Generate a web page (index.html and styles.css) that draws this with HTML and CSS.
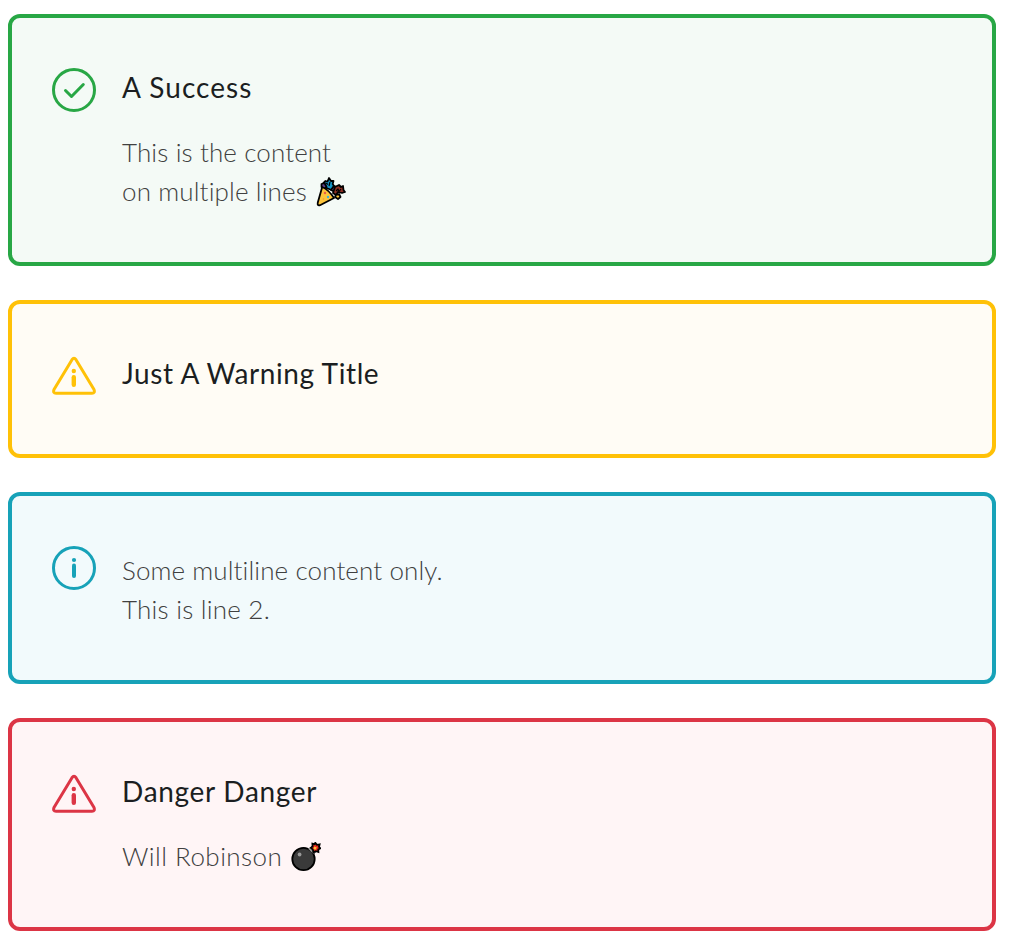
FILE: index.html
```html
<!DOCTYPE html>
<html lang="en">
<head>
<meta charset="utf-8">
<title>Alerts</title>
<link rel="stylesheet" href="styles.css">
</head>
<body>
<main class="alerts">
  <section class="alert success">
    <svg class="icon" viewBox="0 0 44 44"><circle cx="22" cy="22" r="20.5"/><path d="M13.5 22.5l6 6L31.3 16.5"/></svg>
    <div class="body">
      <h2 class="title"><span class="t-success">A Success</span></h2>
      <p class="content"><span class="c-one">This is the content</span><br><span class="c-two">on multiple lines</span><svg class="emoji" viewBox="0 0 30 30"><g stroke="#000" stroke-width="1.8" stroke-linejoin="round"><path fill="#1696c8" d="M7.5 6l2-2 2 .5L13 1l2 3 2.5 0-.8 3L18 9l-2.5 4-5-2-4-3z"/><path fill="#61428f" d="M5.5 7l3-1 2 4-2 2-3-2z"/><path fill="#61428f" d="M15 13l3-4 3 1-2 5z"/><path fill="#8f2f24" d="M17 16l2-6 4-2 2 2 2-1 .5 4 1.5 2-3 1-4-1-2 3z"/><path fill="#fcc43b" d="M20 18l3-1 1.5 3-2.5 2-3-2z"/><path fill="#fcc43b" d="M6.2 10C10 11.5 15 16.5 18 21L4 28.2Q1 29 1.8 25.5z"/><path fill="none" stroke-width="1.2" d="M10 6l2 1.5M14 5l-1 4M20 14l2-2 1 2.5 2-2.5"/></g><circle cx="9" cy="16" r="1.2" fill="#ea5a47"/><circle cx="12" cy="20" r="1.2" fill="#3fb5d6"/><circle cx="7.5" cy="22" r=".8" fill="#e89b2b"/></svg></p>
    </div>
  </section>
  <section class="alert warning">
    <svg class="icon" viewBox="0 0 44 44"><path d="M20 4.7Q22 1.8 24 4.7L42 34.5Q43.3 38.3 40 38.3H4Q.7 38.3 2 34.5Z"/><circle class="solid" cx="21.8" cy="16" r="2.2"/><path class="stem" d="M21.8 22.3v7.4"/></svg>
    <div class="body">
      <h2 class="title"><span class="t-warning">Just A Warning Title</span></h2>
    </div>
  </section>
  <section class="alert info">
    <svg class="icon" viewBox="0 0 44 44"><circle cx="22" cy="22" r="20.5"/><circle class="solid" cx="22" cy="14" r="2.1"/><path class="thin-stem" d="M22 19.5v10.5"/></svg>
    <div class="body">
      <p class="content"><span class="c-three">Some multiline content only.</span><br><span class="c-four">This is line 2.</span></p>
    </div>
  </section>
  <section class="alert danger">
    <svg class="icon" viewBox="0 0 44 44"><path d="M20 4.7Q22 1.8 24 4.7L42 34.5Q43.3 38.3 40 38.3H4Q.7 38.3 2 34.5Z"/><circle class="solid" cx="21.8" cy="16" r="2.2"/><path class="stem" d="M21.8 22.3v7.4"/></svg>
    <div class="body">
      <h2 class="title"><span class="t-danger">Danger Danger</span></h2>
      <p class="content"><span class="c-five">Will Robinson</span><svg class="emoji" viewBox="0 0 30 30"><path d="M18 8l4-4 4 4-4 4z" fill="#8c8c8c" stroke="#000" stroke-width="1.5"/><circle cx="12.5" cy="17" r="11.2" fill="#3a3a3a" stroke="#000" stroke-width="1.8"/><path d="M18 6l3 3 2 2" stroke="#999" stroke-width="2.4" fill="none"/><path d="M24.3.8l1.6 2 2.7-.5-.6 2.5 1.3 1.5-2 1.2.1 2.5-2.5-.8-2.6 1-.4-2.6-2-1.8 1.7-1.4-.2-2.7 2.2.5z" fill="#e8291c" stroke="#000" stroke-width="1.8"/><path d="M22.6 7.2l.6-2.7 1.3.6 1.2.1-.8 2.2z" fill="#fcc43b"/><circle cx="8.6" cy="12.5" r="1.9" fill="#999"/></svg></p>
    </div>
  </section>
</main>
</body>
</html>
```
FILE: styles.css
```css
body {
  margin: 0;
  background: #fff;
  font-family: Lato, sans-serif;
}
.alerts {
  display: flex;
  flex-direction: column;
  gap: 34px;
  padding: 14px 15px 8px 8px;
}
.alert {
  display: flex;
  box-sizing: border-box;
  gap: 26px;
  padding: 50px 40px;
  border: 4px solid var(--accent);
  border-radius: 12px;
  color: var(--accent);
}
.success { --accent: #28a745; background: #f4faf6; height: 252px; }
.warning { --accent: #ffc107; background: #fffcf5; height: 158px; }
.info { --accent: #17a2b8; background: #f2fafc; height: 192px; }
.danger { --accent: #dc3545; background: #fff5f6; height: 213px; }
.icon {
  flex: none;
  width: 44px;
  height: 44px;
  fill: none;
  stroke: currentColor;
  stroke-width: 3;
  stroke-linecap: round;
  stroke-linejoin: round;
}
.warning .icon, .danger .icon { margin-top: 1px; }
.icon .solid { fill: currentColor; stroke: none; }
.icon .stem { stroke-width: 4.4; }
.icon .thin-stem { stroke-width: 4; }
.body { white-space: nowrap; }
.title {
  margin: -2px 0 25px;
  font-size: 28px;
  line-height: 42px;
  font-weight: 400;
  color: #1b1e21;
}
.content {
  margin: 0;
  font-size: 26px;
  line-height: 39px;
  font-weight: 300;
  color: #404040;
}
.info .content { margin-top: 5px; }
.t-success { letter-spacing: 1.05px; }
.t-warning { letter-spacing: 0.6px; }
.t-danger { letter-spacing: 0.7px; }
.c-one { letter-spacing: 0.12px; }
.c-two { letter-spacing: 0.13px; }
.c-three { letter-spacing: 0.1px; }
.c-four { letter-spacing: 0.23px; }
.c-five { letter-spacing: 0.45px; }
.emoji {
  width: 30px;
  height: 30px;
  margin-left: 9px;
  vertical-align: -6px;
}
```
